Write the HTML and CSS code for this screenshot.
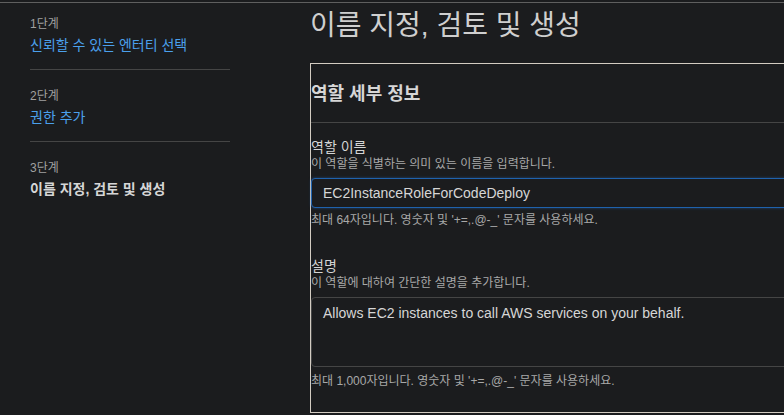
FILE: index.html
```html
<!DOCTYPE html>
<html lang="ko">
<head>
    <meta charset="UTF-8">
    <meta name="viewport" content="width=device-width, initial-scale=1.0">
    <title>역할 생성</title>
    <link rel="stylesheet" href="styles.css">
</head>
<body>
    <div class="page">
        <nav class="steps">
            <div class="step">
                <div class="step-num">1단계</div>
                <a class="step-link" href="#">신뢰할 수 있는 엔터티 선택</a>
            </div>
            <div class="step">
                <div class="step-num">2단계</div>
                <a class="step-link" href="#">권한 추가</a>
            </div>
            <div class="step last">
                <div class="step-num">3단계</div>
                <div class="step-current">이름 지정, 검토 및 생성</div>
            </div>
        </nav>

        <main class="content">
            <h1>이름 지정, 검토 및 생성</h1>

            <section class="panel">
                <h2 class="panel-title">역할 세부 정보</h2>
                <div class="panel-body">
                    <div class="field">
                        <label for="role-name">역할 이름</label>
                        <div class="desc">이 역할을 식별하는 의미 있는 이름을 입력합니다.</div>
                        <input type="text" id="role-name" value="EC2InstanceRoleForCodeDeploy">
                        <div class="hint">최대 64자입니다. 영숫자 및 '+=,.@-_' 문자를 사용하세요.</div>
                    </div>
                    <div class="field">
                        <label for="role-desc">설명</label>
                        <div class="desc">이 역할에 대하여 간단한 설명을 추가합니다.</div>
                        <textarea id="role-desc">Allows EC2 instances to call AWS services on your behalf.</textarea>
                        <div class="hint">최대 1,000자입니다. 영숫자 및 '+=,.@-_' 문자를 사용하세요.</div>
                    </div>
                </div>
            </section>
        </main>
    </div>
</body>
</html>
```

FILE: styles.css
```css
html, body {
    margin: 0;
    padding: 0;
    height: 100%;
    overflow: hidden;
}
body {
    background-color: #1b1c1e;
    color: #d5d5d5;
    font-family: "Liberation Sans", "Noto Sans CJK KR", sans-serif;
}
.page {
    display: flex;
    margin-top: 2px;
    border-top: 1px solid #5f5f5f;
    height: 100%;
}
.steps {
    flex: 0 0 200px;
    margin-left: 30px;
    margin-right: 80px;
    padding-top: 10px;
}
.step {
    padding: 2px 0 13px;
    margin-bottom: 15px;
    border-bottom: 1px solid #454545;
}
.step.last {
    border-bottom: none;
}
.step-num {
    font-size: 12px;
    line-height: 18px;
    color: #a0a0a0;
    margin-bottom: 1px;
}
.step-link {
    display: block;
    font-size: 14px;
    line-height: 22px;
    color: #4ba0ec;
    text-decoration: none;
}
.step-current {
    font-size: 14px;
    line-height: 22px;
    font-weight: bold;
    color: #d6d6d6;
}
.content {
    flex: 0 0 600px;
}
h1 {
    margin: 5px 0 19px;
    font-size: 28px;
    line-height: 36px;
    font-weight: normal;
    color: #cfcfcf;
}
.panel {
    border: 1px solid #d3ccc2;
}
.panel-title {
    margin: 0;
    padding: 18px 0 16px;
    font-size: 18px;
    line-height: 24px;
    font-weight: bold;
    color: #d6d6d6;
    border-bottom: 1px solid #454545;
}
.panel-body {
    padding: 15px 0 23px;
}
.field + .field {
    margin-top: 29px;
}
label {
    display: block;
    font-size: 14px;
    line-height: 18px;
    color: #d5d5d5;
}
.desc, .hint {
    font-size: 12px;
    line-height: 16px;
    color: #a8a8a8;
}
input, textarea {
    display: block;
    box-sizing: border-box;
    width: 100%;
    margin: 6px 0 4px;
    padding: 0 11px;
    background-color: #1b1c1e;
    color: #d6d6d6;
    font-family: "Liberation Sans", "Noto Sans CJK KR", sans-serif;
    font-size: 14px;
    border-radius: 4px;
    outline: none;
}
input {
    height: 30px;
    border: 1px solid #1f62ad;
    box-shadow: 0 0 3px rgba(40, 110, 200, 0.5);
}
textarea {
    height: 70px;
    padding-top: 7px;
    border: 1px solid #454545;
    resize: none;
    margin-bottom: 6px;
}
```
